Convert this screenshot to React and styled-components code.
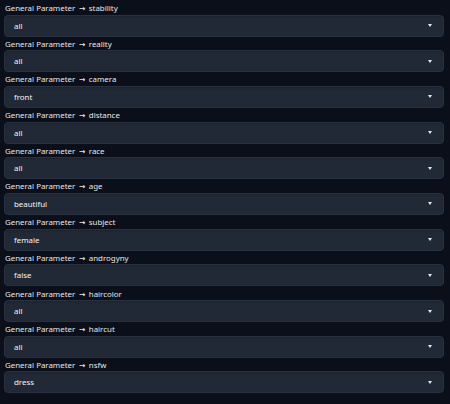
import React from "react";
import styled, { createGlobalStyle } from "styled-components";

const Global = createGlobalStyle`
  body {
    margin: 0;
    background: #0b0f19;
    font-family: "Noto Sans", "Liberation Sans", sans-serif;
  }
`;

const Page = styled.div`
  display: flex;
  flex-direction: column;
  padding: 3px 6px 0 4px;
  gap: 1px;
  width: 450px;
  box-sizing: border-box;
`;

const Field = styled.div`
  display: flex;
  flex-direction: column;
  height: 34.7px;
`;

const Label = styled.span`
  color: #e5e7eb;
  font-size: 7.9px;
  line-height: 11px;
  height: 11.5px;
  padding-left: 1px;
  white-space: nowrap;
`;

const Arrow = styled.span`
  font-family: "DejaVu Sans", sans-serif;
  font-weight: bold;
  font-size: 7.5px;
  margin: 0 1px;
`;

const Select = styled.div`
  display: flex;
  align-items: center;
  justify-content: space-between;
  height: 22px;
  background: #212936;
  border: 1px solid #283142;
  border-radius: 4px;
  box-sizing: border-box;
  padding: 0 11px 0 9px;
  color: #f3f4f6;
  font-size: 7.9px;
  box-shadow: inset 0 1px 2px rgba(0, 0, 0, 0.15);
`;

const Caret = styled.span`
  width: 0;
  height: 0;
  border-left: 2.5px solid transparent;
  border-right: 2.5px solid transparent;
  border-top: 3px solid #e5e7eb;
`;

const fields = [
  ["stability", "all"],
  ["reality", "all"],
  ["camera", "front"],
  ["distance", "all"],
  ["race", "all"],
  ["age", "beautiful"],
  ["subject", "female"],
  ["androgyny", "false"],
  ["haircolor", "all"],
  ["haircut", "all"],
  ["nsfw", "dress"],
];

function App() {
  return (
    <>
      <Global />
      <Page>
        {fields.map(([name, value]) => (
          <Field key={name}>
            <Label>
              General Parameter<Arrow> → </Arrow>{name}
            </Label>
            <Select>
              <span>{value}</span>
              <Caret />
            </Select>
          </Field>
        ))}
      </Page>
    </>
  );
}

export default App;
